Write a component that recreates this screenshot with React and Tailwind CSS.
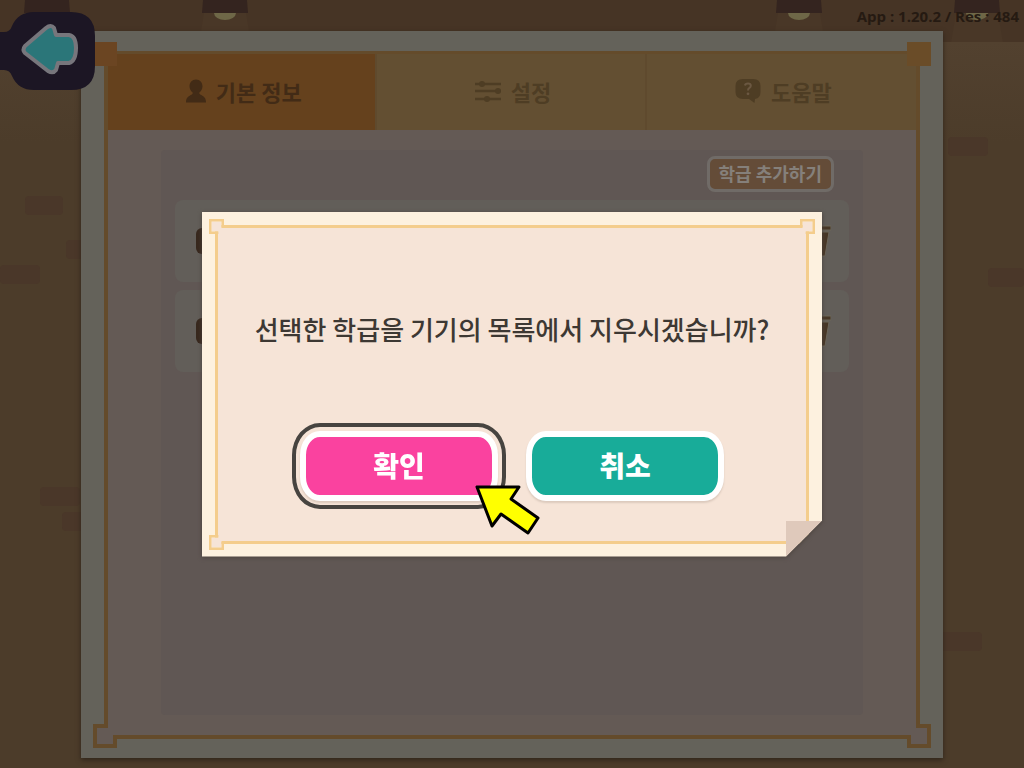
import React from 'react';

const tabs = [
  { label: '기본 정보', icon: UserIcon, active: true },
  { label: '설정', icon: SlidersIcon },
  { label: '도움말', icon: HelpIcon }
];

const classes = [1, 2];

const lamps = [24, 202, 776, 954];

const bricks = [
  [25, 196, 38],
  [66, 240, 38],
  [0, 265, 40],
  [40, 487, 40],
  [62, 512, 38],
  [948, 137, 40],
  [988, 268, 36],
  [940, 632, 42]
];

function UserIcon() {
  return (
    <svg viewBox="0 0 20 23" className="h-6 w-5" fill="currentColor" aria-hidden="true">
      <path d="M10 0c4 0 6.500 3 6.500 6.800 0 3-1.500 5-3.300 6.400 0 1 1 1.800 2.500 2.600C18.500 17.500 20 19 20 23H0c0-4 1.500-5.500 4.300-7.200 1.500-.8 2.500-1.600 2.500-2.600C5 11.800 3.500 9.800 3.500 6.800 3.500 3 6 0 10 0z" />
    </svg>
  );
}

function SlidersIcon() {
  return (
    <svg viewBox="0 0 26 22" className="h-6 w-[26px]" aria-hidden="true">
      <path d="M0 4h26M0 11h26M0 19h26" stroke="currentColor" strokeWidth="2.600" />
      <g fill="currentColor">
        <circle cx="7" cy="4" r="3" />
        <circle cx="23" cy="11" r="3" />
        <circle cx="12" cy="19" r="3" />
      </g>
    </svg>
  );
}

function HelpIcon() {
  return (
    <svg viewBox="0 0 26 24" className="h-6 w-[26px]" aria-hidden="true">
      <path d="M8 0h10q7.500 0 7.500 7v6q0 6-5.500 7l-.5 4-5.500-4H8q-7.500 0-7.500-7V7Q.5 0 8 0z" fill="currentColor" />
      <path d="M10 6.500q.3-2 3-2t2.800 2.300q0 1.400-1.600 2.300-1.200.7-1.200 2.400" fill="none" stroke="#6b5842" strokeWidth="2" />
      <circle cx="13" cy="14.800" r="1.400" fill="#6b5842" />
    </svg>
  );
}

function TrashIcon() {
  return (
    <svg viewBox="0 0 28 30" className="h-8 w-7" aria-hidden="true">
      <path d="M0 0h28v4H0zM2 6h24l-4 24H6z" fill="#473625" stroke="#6c6659" strokeWidth="1" />
    </svg>
  );
}

// Stepped corner of the paper frame, drawn for the bottom left
function Corner({ className, line, fill }) {
  return (
    <svg viewBox="0 0 24 24" className={`absolute ${className}`} aria-hidden="true">
      <path d="M4 4h16v16H4z" fill={fill} />
      <path d="M15 2H2v20h20v-11" fill="none" stroke={line} strokeWidth="4" />
    </svg>
  );
}

function Wall() {
  return (
    <svg
      viewBox="0 0 1024 768"
      preserveAspectRatio="xMidYMin slice"
      className="absolute inset-0 h-full w-full"
      aria-hidden="true"
    >
      <defs>
        <linearGradient id="glow" x1="0" y1="0" x2="0" y2="1">
          <stop offset="0" stopColor="#52412f" />
          <stop offset="1" stopColor="#4c3c2a" />
        </linearGradient>
      </defs>
      <path d="M0 0h1024v768H0z" fill="#4c3c2a" />
      <path d="M0 42h1024v100H0z" fill="url(#glow)" />
      <path d="M0 0h1024v42H0z" fill="#463425" />
      {bricks.map(([x, y, w]) => (
        <rect key={`${x}-${y}`} x={x} y={y} width={w} height="19" rx="4" fill="#4a3729" />
      ))}
      {lamps.map((x) => (
        <g key={x}>
          <path d={`M${x + 2} 13h42l5 29h-52z`} fill="#493727" />
          <ellipse cx={x + 23} cy="13" rx="11" ry="7" fill="#6e6747" />
          <path d={`M${x + 1} 0h44l1 13H${x}z`} fill="#34241f" />
        </g>
      ))}
    </svg>
  );
}

function BackButton() {
  return (
    <button type="button" aria-label="뒤로" className="absolute left-0 top-3 z-10">
      <svg viewBox="0 0 95 78" className="h-[78px] w-[95px]" aria-hidden="true">
        <path d="M0 20h4q6 0 8-6Q18 0 34 0h37q24 0 24 24v30q0 24-24 24H34Q18 78 12 64q-2-6-8-6H0z" fill="#1c1624" />
        <path
          d="M25 34 46 16q5-4 8 0l2 7h13q7 1 7 13 0 13-7 15H58l-2 7q-3 4-8 1L25 41q-3-3 0-7z"
          fill="#2b7679"
          stroke="#77767c"
          strokeWidth="4"
          strokeLinejoin="round"
        />
      </svg>
    </button>
  );
}

function Pointer() {
  return (
    <svg viewBox="0 0 66 52" className="pointer-events-none absolute left-[174px] top-[53px] h-[52px] w-[66px]" aria-hidden="true">
      <path
        d="M3 3h42l-8 12 27 19-10 15-27-19-9 12z"
        fill="#ffff00"
        stroke="#000"
        strokeWidth="3"
        strokeLinejoin="round"
      />
    </svg>
  );
}

function Panel() {
  return (
    <main className="relative flex flex-1 flex-col bg-[#64625a] px-[23px] pb-[19px] pt-5 shadow-[0_2px_5px_#30251b]">
      <div className="flex flex-1 flex-col border-4 border-t-[3px] border-[#644b2b] bg-[#645a55]">
        <nav className="grid grid-cols-3 bg-[#634f32]">
          {tabs.map(({ label, icon: Icon, active }) => (
            <button
              key={label}
              type="button"
              className={`flex h-[76px] items-center justify-center gap-[10px] border-r-2 border-[#5f4a2e] pb-[2px] pl-1 text-[22px] font-bold last:border-r-0 ${
                active ? 'bg-[#65411d] text-[#422b16]' : 'text-[#4e3d24]'
              }`}
            >
              <Icon />
              <span>{label}</span>
            </button>
          ))}
        </nav>
        <div className="mx-[53px] mb-5 mt-5 flex flex-1 flex-col rounded bg-[#605754] px-[14px] pt-[6px]">
          <button
            type="button"
            className="mr-[15px] h-9 self-end rounded-lg border-[3px] border-[#706b67] bg-[#644c38] px-[9px] pb-[2px] text-lg leading-none font-bold text-[#85807b]"
          >
            학급 추가하기
          </button>
          <ul className="mt-2 flex flex-col gap-2">
            {classes.map((id) => (
              <li key={id} className="flex h-[82px] items-center justify-between rounded-lg bg-[#625e59] pl-[21px] pr-[18px]">
                <span className="h-[26px] w-7 rounded-md bg-[#37281d]" />
                <TrashIcon />
              </li>
            ))}
          </ul>
        </div>
      </div>
      <span className="absolute left-3 top-[11px] size-6 bg-[#6b4522]" />
      <span className="absolute right-3 top-[11px] size-6 bg-[#6a4c28]" />
      <Corner className="bottom-[10px] left-3 size-6" line="#644b2b" fill="#645a55" />
      <Corner className="bottom-[10px] right-3 size-6 -scale-x-100" line="#644b2b" fill="#645a55" />
    </main>
  );
}

function ConfirmDialog() {
  const corner = { line: '#f4cd8c', fill: '#f6e4d7' };
  const button =
    'h-[70px] w-[198px] rounded-[20px/24px] border-[6px] border-white pb-[2px] text-[28px] leading-none font-black text-white shadow-[0_2px_2px_#dccabd]';

  return (
    <div className="absolute inset-0 z-20 flex items-center justify-center">
      <div className="drop-shadow-[0_1px_2px_#4a413c]">
        <div
          role="dialog"
          aria-modal="true"
          aria-labelledby="confirm-title"
          className="relative w-[620px] bg-[#fdf1df] p-[13px] [clip-path:polygon(0_0,100%_0,100%_calc(100%-36px),calc(100%-36px)_100%,0_100%)]"
        >
          <div className="flex flex-col items-center border-[3px] border-[#f4cd8c] bg-[#f6e4d7] pb-10 pt-[81px]">
            <h1 id="confirm-title" className="text-[26px] leading-10 font-medium text-[#3d3833]">
              선택한 학급을 기기의 목록에서 지우시겠습니까?
            </h1>
            <div className="mt-[82px] flex gap-7">
              <div className="relative z-10">
                <button type="button" className={`${button} bg-[#fa429f] outline-4 outline-offset-4 outline-[#474440]`}>
                  확인
                </button>
                <Pointer />
              </div>
              <button type="button" className={`${button} bg-[#18ac99]`}>
                취소
              </button>
            </div>
          </div>
          <Corner className="left-[7px] top-[7px] size-[15px] -scale-y-100" {...corner} />
          <Corner className="right-[7px] top-[7px] size-[15px] -scale-100" {...corner} />
          <Corner className="bottom-[7px] left-[7px] size-[15px]" {...corner} />
          <svg viewBox="0 0 36 36" className="absolute bottom-0 right-0 size-9" aria-hidden="true">
            <path d="M0 0h36L0 36z" fill="#dfc9bb" />
          </svg>
        </div>
      </div>
    </div>
  );
}

function App() {
  return (
    <div className="relative flex min-h-screen flex-col overflow-hidden px-[81px] pb-[10px] pt-[31px] font-['Noto_Sans_CJK_KR',sans-serif]">
      <Wall />
      <BackButton />
      <p className="absolute right-[5px] top-1 font-['Open_Sans','Noto_Sans',sans-serif] text-[15px] leading-6 font-bold text-[#251a12]">
        App : 1.20.2 / Res : 484
      </p>
      <Panel />
      <ConfirmDialog />
    </div>
  );
}

export default App;
